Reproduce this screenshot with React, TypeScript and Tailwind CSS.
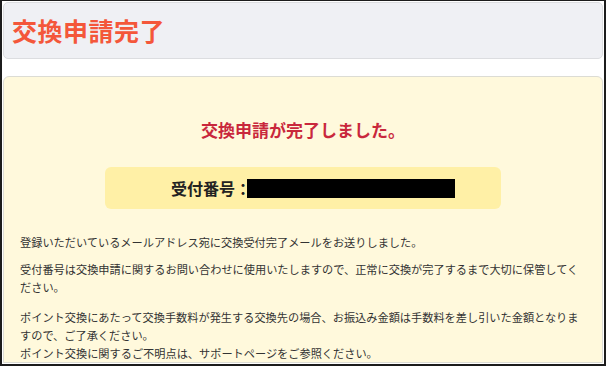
import React from "react";

const jp = { fontFamily: '"Noto Sans CJK JP", "Noto Sans", sans-serif' };

const App: React.FC = () => {
  return (
    <div
      className="w-[606px] h-[366px] overflow-hidden bg-white border-[#1c1c1c] border-t border-l-2 border-r-2 border-b-2 p-px flex flex-col"
      style={jp}
    >
      <div className="h-[57px] shrink-0 bg-[#eff0f4] border border-[#dcdde0] rounded-[5px] flex items-center pl-[8px]">
        <h1 className="text-[25px] font-bold text-[#f4573a] leading-none tracking-[0.5px]">
          交換申請完了
        </h1>
      </div>

      <div className="mt-[17px] flex-1 bg-[#fff9dc] border border-[#dcdcd4] rounded-t-[6px] px-[16px] pt-[43px]">
        <p className="text-center text-[17px] font-bold text-[#c9283c] leading-[20px]">
          交換申請が完了しました。
        </p>

        <div className="mt-[27px] mx-[85px] h-[42px] bg-[#fff0a6] rounded-[6px] flex items-center pl-[66px]">
          <span className="text-[16px] font-bold text-[#222] leading-none">受付番号：</span>
          <span className="ml-[-4px] w-[208px] h-[19px] bg-black"></span>
        </div>

        <div className="mt-[24px] text-[11.2px] leading-[18px] text-[#333] w-[566px]">
          <p>登録いただいているメールアドレス宛に交換受付完了メールをお送りしました。</p>
          <p className="mt-[9px]">
            受付番号は交換申請に関するお問い合わせに使用いたしますので、正常に交換が完了するまで大切に保管してください。
          </p>
          <p className="mt-[12px]">
            ポイント交換にあたって交換手数料が発生する交換先の場合、お振込み金額は手数料を差し引いた金額となりますので、ご了承ください。
          </p>
          <p>ポイント交換に関するご不明点は、サポートページをご参照ください。</p>
        </div>
      </div>
    </div>
  );
};

export default App;
